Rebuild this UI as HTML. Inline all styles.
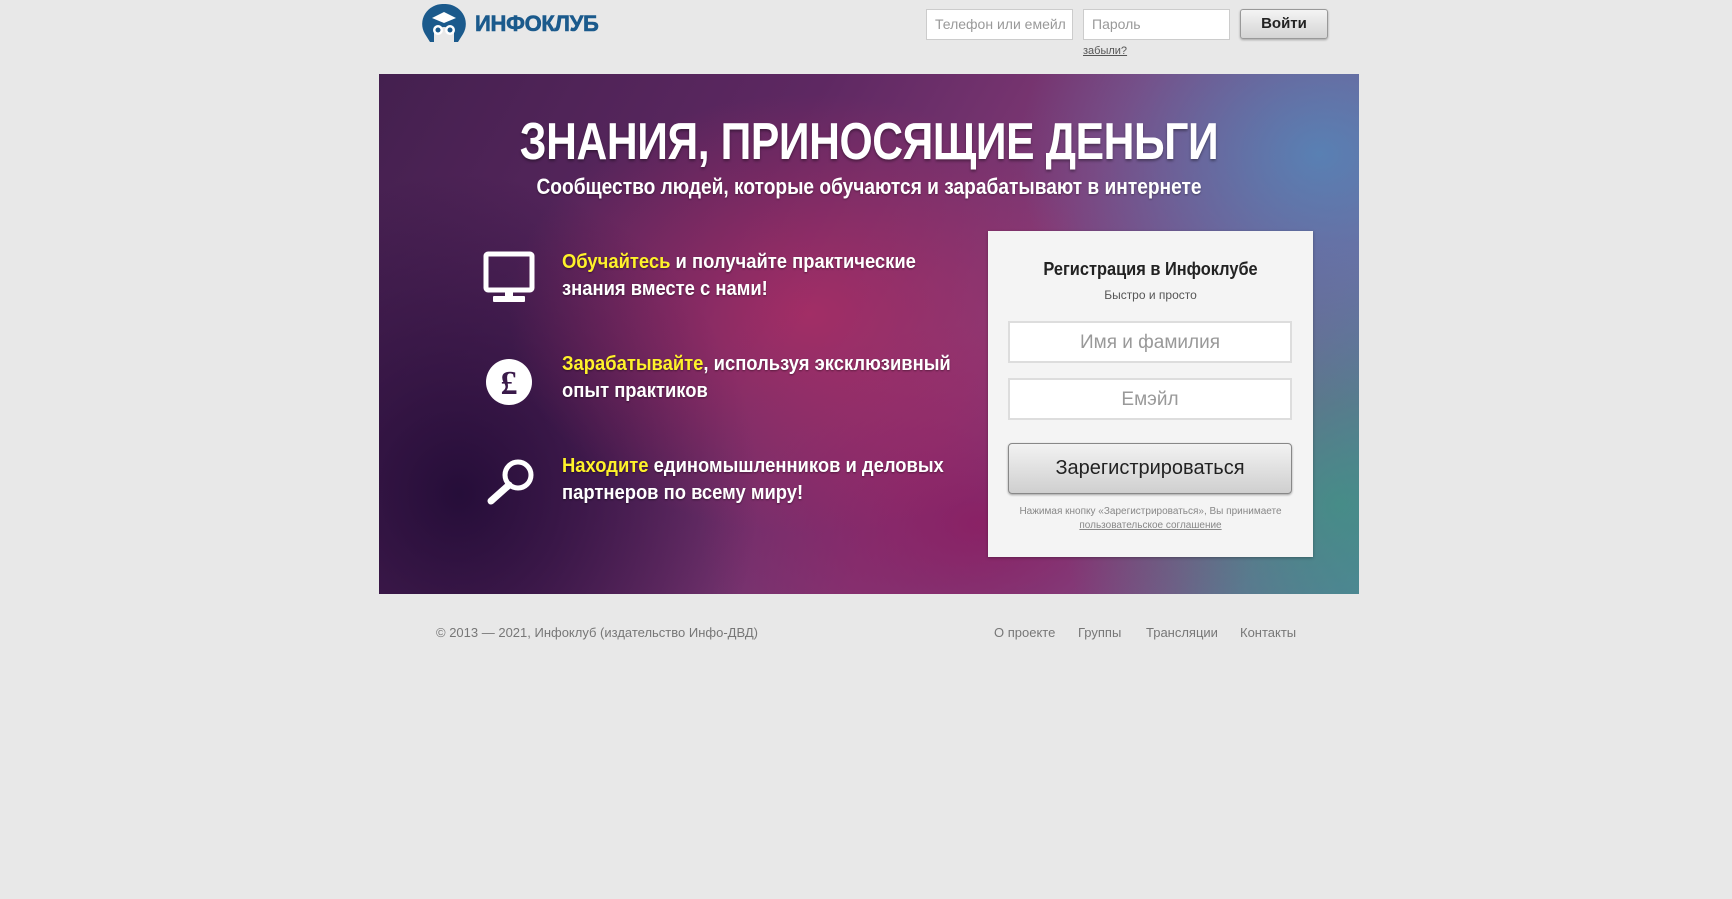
<!DOCTYPE html>
<html><head><meta charset="utf-8"><style>
*{margin:0;padding:0;box-sizing:border-box}
body{width:1732px;height:899px;background:#e8e8e8;font-family:"Liberation Sans",sans-serif;position:relative;overflow:hidden}
.a{position:absolute}
.inp{position:absolute;background:#fff;border:1px solid #ccc;font-size:14px;color:#999;padding-left:8px;line-height:29px;height:31px}
.banner{left:379px;top:74px;width:980px;height:520px;overflow:hidden;
background:
radial-gradient(ellipse 300px 250px at 940px 80px,rgba(80,140,190,.8),rgba(80,140,190,0)),
radial-gradient(ellipse 280px 260px at 960px 430px,rgba(60,150,130,.75),rgba(60,150,130,0)),
radial-gradient(ellipse 300px 220px at 430px 240px,rgba(180,45,100,.75),rgba(180,45,100,0)),
radial-gradient(ellipse 280px 200px at 600px 450px,rgba(140,25,95,.8),rgba(140,25,95,0)),
radial-gradient(ellipse 300px 320px at 80px 420px,rgba(35,12,55,.95),rgba(35,12,55,0)),
linear-gradient(120deg,#44204f 0%,#5e2862 35%,#823a76 60%,#7a5a90 85%,#5a7aa0 100%)}
.ft{font-weight:bold;color:#fff;font-size:20px;line-height:27px;text-shadow:0 1px 2px rgba(0,0,0,.4);transform:scaleX(.92);transform-origin:left top;white-space:nowrap}
.y{color:#fff22a}
</style></head><body>
<svg class="a" style="left:422px;top:4px" width="44" height="40" viewBox="0 0 44 40"><path d="M22 0A21 20 0 0 0 3 30L8 38 12 38 12 26Q22 20 32 26L32 38 36 38 41 30A21 20 0 0 0 22 0Z" fill="#1b5a8c"/><path d="M10 14L22 8 34 14 22 19Z" fill="#fff"/><circle cx="16" cy="26" r="5" fill="#fff"/><circle cx="28" cy="26" r="5" fill="#fff"/><circle cx="16" cy="26" r="2.5" fill="#1b5a8c"/><circle cx="28" cy="26" r="2.5" fill="#1b5a8c"/></svg>
<div class="a" style="left:475px;top:11px;font-size:22px;font-weight:900;color:#1b5a8c;letter-spacing:-0.3px;-webkit-text-stroke:0.6px #1b5a8c">ИНФОКЛУБ</div>
<div class="inp" style="left:926px;top:9px;width:147px">Телефон или емейл</div>
<div class="inp" style="left:1083px;top:9px;width:147px">Пароль</div>
<div class="a" style="left:1240px;top:9px;width:88px;height:30px;border:1px solid #999;border-radius:3px;background:linear-gradient(#f4f4f4,#d4d4d4);font-weight:bold;font-size:15px;text-align:center;line-height:28px;color:#222;box-shadow:0 1px 2px rgba(0,0,0,.3)">Войти</div>
<div class="a" style="left:1083px;top:45px;font-size:11px;color:#555;text-decoration:underline">забыли?</div>

<div class="a banner">
<div class="a" style="left:0;width:980px;top:38px;text-align:center;font-weight:bold;font-size:52px;color:#fff;letter-spacing:-0.5px;text-shadow:0 2px 3px rgba(0,0,0,.35);transform:scaleX(.82);transform-origin:center">ЗНАНИЯ, ПРИНОСЯЩИЕ ДЕНЬГИ</div>
<div class="a" style="left:0;width:980px;top:100px;text-align:center;font-weight:bold;font-size:22px;color:#fff;text-shadow:0 1px 2px rgba(0,0,0,.35);transform:scaleX(.87);transform-origin:center">Сообщество людей, которые обучаются и зарабатывают в интернете</div>
<svg class="a" style="left:104px;top:177px" width="52" height="52" viewBox="0 0 52 52"><rect x="3" y="3" width="46" height="36" rx="2" fill="none" stroke="#fff" stroke-width="5"/><rect x="22" y="39" width="8" height="7" fill="#fff"/><rect x="10" y="45" width="32" height="6" rx="1" fill="#fff"/></svg>
<div class="a ft" style="left:183px;top:175px"><span class="y">Обучайтесь</span> и получайте практические<br>знания вместе с нами!</div>
<svg class="a" style="left:105px;top:285px" width="52" height="48" viewBox="0 0 52 48"><circle cx="25" cy="23" r="23" fill="#fff"/><text x="25" y="35" text-anchor="middle" font-family="Liberation Serif,serif" font-weight="bold" font-size="34" fill="#3a1a4a">£</text></svg>
<div class="a ft" style="left:183px;top:277px"><span class="y">Зарабатывайте</span>, используя эксклюзивный<br>опыт практиков</div>
<svg class="a" style="left:105px;top:380px" width="52" height="52" viewBox="0 0 52 52"><circle cx="34" cy="21" r="13" fill="none" stroke="#fff" stroke-width="5"/><path d="M25 31L7 47" stroke="#fff" stroke-width="7" stroke-linecap="round"/></svg>
<div class="a ft" style="left:183px;top:379px"><span class="y">Находите</span> единомышленников и деловых<br>партнеров по всему миру!</div>

<div class="a" style="left:609px;top:157px;width:325px;height:326px;background:#f4f4f4;box-shadow:0 1px 3px rgba(0,0,0,.3)">
<div class="a" style="left:0;width:325px;top:28px;text-align:center;font-weight:bold;font-size:18px;color:#222;transform:scaleX(.91)">Регистрация в Инфоклубе</div>
<div class="a" style="left:0;width:325px;top:57px;text-align:center;font-size:12px;color:#555">Быстро и просто</div>
<div class="a" style="left:20px;top:90px;width:284px;height:42px;background:#fff;border:2px solid #ddd;text-align:center;font-size:19px;color:#999;line-height:40px">Имя и фамилия</div>
<div class="a" style="left:20px;top:147px;width:284px;height:42px;background:#fff;border:2px solid #ddd;text-align:center;font-size:19px;color:#999;line-height:40px">Емэйл</div>
<div class="a" style="left:20px;top:212px;width:284px;height:51px;border:1px solid #888;border-radius:4px;background:linear-gradient(#f2f2f2,#cfcfcf);text-align:center;font-size:20px;color:#222;line-height:48px;box-shadow:0 1px 2px rgba(0,0,0,.35)">Зарегистрироваться</div>
<div class="a" style="left:0;width:325px;top:274px;text-align:center;font-size:10px;color:#888;line-height:14px">Нажимая кнопку «Зарегистрироваться», Вы принимаете<br><u>пользовательское соглашение</u></div>
</div>
</div>

<div class="a" style="left:436px;top:625px;font-size:13px;color:#777">© 2013 — 2021, Инфоклуб (издательство Инфо-ДВД)</div>
<div class="a" style="left:994px;top:625px;font-size:13px;color:#777">О проекте</div>
<div class="a" style="left:1078px;top:625px;font-size:13px;color:#777">Группы</div>
<div class="a" style="left:1146px;top:625px;font-size:13px;color:#777">Трансляции</div>
<div class="a" style="left:1240px;top:625px;font-size:13px;color:#777">Контакты</div>
</body></html>
